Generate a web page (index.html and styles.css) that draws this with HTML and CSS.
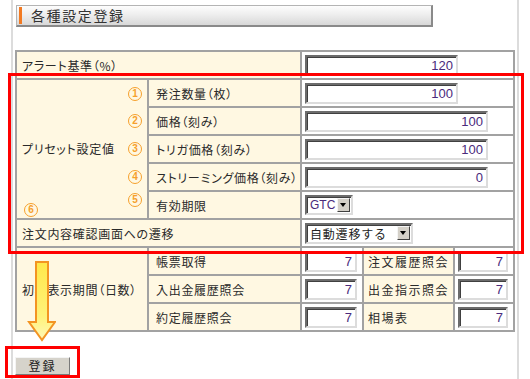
FILE: index.html
```html
<!DOCTYPE html>
<html lang="ja">
<head>
<meta charset="utf-8">
<link rel="stylesheet" href="styles.css">
</head>
<body>
<div class="panel">
  <div class="title"><span class="title-text">各種設定登録</span></div>

  <table class="settings">
    <colgroup>
      <col class="c1"><col class="c2"><col class="c3"><col class="c4"><col class="c5">
    </colgroup>
    <tr>
      <td class="lbl" colspan="2">アラート基準（%）</td>
      <td class="val" colspan="3"><span class="inp w153">120</span></td>
    </tr>
    <tr>
      <td class="lbl preset" rowspan="5">
        <div class="preset-grid">
          <span class="preset-text">プリセット設定値</span>
          <span class="num n1">1</span>
          <span class="num n2">2</span>
          <span class="num n3">3</span>
          <span class="num n4">4</span>
          <span class="num n5">5</span>
          <span class="num n6">6</span>
        </div>
      </td>
      <td class="lbl sub">発注数量（枚）</td>
      <td class="val" colspan="3"><span class="inp w153">100</span></td>
    </tr>
    <tr>
      <td class="lbl sub">価格（刻み）</td>
      <td class="val" colspan="3"><span class="inp w183">100</span></td>
    </tr>
    <tr>
      <td class="lbl sub">トリガ価格（刻み）</td>
      <td class="val" colspan="3"><span class="inp w183">100</span></td>
    </tr>
    <tr>
      <td class="lbl sub">ストリーミング価格（刻み）</td>
      <td class="val" colspan="3"><span class="inp w183">0</span></td>
    </tr>
    <tr>
      <td class="lbl sub">有効期限</td>
      <td class="val" colspan="3"><span class="sel sel-gtc"><span class="sel-text gtc">GTC</span><span class="sel-btn"></span></span></td>
    </tr>
    <tr>
      <td class="lbl" colspan="2">注文内容確認画面への遷移</td>
      <td class="val" colspan="3"><span class="sel sel-auto"><span class="sel-text">自動遷移する</span><span class="sel-btn"></span></span></td>
    </tr>
    <tr>
      <td class="lbl" rowspan="3">初期表示期間（日数）</td>
      <td class="lbl sub">帳票取得</td>
      <td class="val"><span class="inp w52">7</span></td>
      <td class="lbl sub2">注文履歴照会</td>
      <td class="val"><span class="inp w50">7</span></td>
    </tr>
    <tr>
      <td class="lbl sub">入出金履歴照会</td>
      <td class="val"><span class="inp w52">7</span></td>
      <td class="lbl sub2">出金指示照会</td>
      <td class="val"><span class="inp w50">7</span></td>
    </tr>
    <tr>
      <td class="lbl sub">約定履歴照会</td>
      <td class="val"><span class="inp w52">7</span></td>
      <td class="lbl sub2">相場表</td>
      <td class="val"><span class="inp w50">7</span></td>
    </tr>
  </table>

  <div class="actions"><span class="btn">登録</span></div>
</div>

<div class="mark mark-table"></div>
<div class="mark mark-btn"></div>
<svg class="arrow" width="30" height="82" viewBox="26 260 30 82">
  <defs>
    <linearGradient id="ag" x1="0" y1="0" x2="0" y2="1">
      <stop offset="0" stop-color="#ffe84a"/>
      <stop offset="0.7" stop-color="#fff27a"/>
      <stop offset="1" stop-color="#fff8b8"/>
    </linearGradient>
  </defs>
  <path d="M36 262 H48 V322 H55 L42 340 L29 322 H36 Z" fill="url(#ag)" stroke="#f39422" stroke-width="2" stroke-linejoin="miter"/>
</svg>
</body>
</html>
```

FILE: styles.css
```css
html, body {
  margin: 0;
  padding: 0;
  background: #ffffff;
}
body {
  position: relative;
  width: 530px;
  height: 379px;
  overflow: hidden;
  font-family: "Noto Sans CJK JP", "Noto Sans", sans-serif;
  color: #333333;
}
.panel {
  margin-left: 11px;
  width: 504px;
  height: 376px;
  border: 2px solid #dcdcdc;
  border-top: none;
  padding-top: 5px;
  box-sizing: content-box;
}
.panel > * { box-sizing: border-box; }

.title {
  margin-left: 3px;
  width: 417px;
  height: 22px;
  padding: 1px 0 1px 2px;
  border: 1px solid #b4b4b4;
  border-right: 2px solid #8a8a8a;
  border-bottom: 2px solid #8a8a8a;
  background: linear-gradient(#fdfdfd, #eeeeee 45%, #d8d8d8);
  display: flex;
  align-items: stretch;
}
.title-text {
  border-left: 3px solid #f27a22;
  padding-left: 9px;
  font-size: 14px;
  line-height: 17px;
  letter-spacing: 1.6px;
  color: #333;
  display: flex;
  align-items: center;
}

.settings {
  margin: 23px 0 0 2px;
  border-collapse: collapse;
  table-layout: fixed;
  width: 498px;
  font-size: 12px;
}
.settings td {
  border: 2px solid #a2a2a2;
  height: 26px;
  padding: 0;
  vertical-align: middle;
}
col.c1 { width: 132px; }
col.c2 { width: 153px; }
col.c3 { width: 62px; }
col.c4 { width: 91px; }
col.c5 { width: 60px; }

.lbl {
  background: #fff8e2;
  padding-left: 5px !important;
  letter-spacing: 0.7px;
  font-feature-settings: "palt";
  white-space: nowrap;
  overflow: hidden;
  color: #2a2a2a;
}
.lbl.sub { padding-left: 7px !important; }
.lbl.sub2 { padding-left: 4px !important; letter-spacing: 1.5px; }
.val { background: #ffffff; padding-left: 3px !important; }

.preset { padding: 0 !important; }
.preset-grid {
  display: grid;
  grid-template-columns: 1fr auto;
  grid-template-rows: repeat(5, 1fr);
  height: 138px;
  padding-left: 5px;
  padding-right: 5px;
}
.preset-text { grid-column: 1; grid-row: 3; align-self: center; }
.num {
  grid-column: 2;
  align-self: center;
  width: 14px;
  height: 14px;
  box-sizing: border-box;
  border: 1.6px solid #f6a02c;
  border-radius: 50%;
  color: #f6a02c;
  font-family: "Liberation Sans", Arial, sans-serif;
  font-weight: bold;
  font-size: 10px;
  line-height: 11px;
  text-align: center;
  letter-spacing: 0;
}
.n1 { grid-row: 1; }
.n2 { grid-row: 2; }
.n3 { grid-row: 3; }
.n4 { grid-row: 4; }
.n5 { grid-row: 5; margin-top: -8px; }
.n6 { grid-column: 1; grid-row: 5; align-self: end; margin: 0 0 1px 2px; }

.inp {
  display: block;
  height: 21px;
  box-sizing: border-box;
  border-style: solid;
  border-width: 2px;
  border-color: #6c6c6c #dcdcdc #dcdcdc #6c6c6c;
  box-shadow: inset 1px 1px 0 #404040;
  background: #fff;
  text-align: right;
  padding-right: 3px;
  font-family: "Liberation Sans", Arial, sans-serif;
  font-size: 13px;
  line-height: 17px;
  color: #4a2a7c;
}
.w153 { width: 153px; }
.w183 { width: 183px; }
.w52 { width: 52px; }
.w50 { width: 50px; }

.sel {
  display: flex;
  align-items: center;
  box-sizing: border-box;
  border-style: solid;
  border-width: 2px;
  border-color: #6c6c6c #dcdcdc #dcdcdc #6c6c6c;
  box-shadow: inset 1px 1px 0 #404040;
  background: #fff;
  padding: 1px 1px 1px 3px;
}
.sel-gtc { width: 48px; height: 20px; }
.sel-auto { width: 108px; height: 21px; }
.sel-text {
  flex: 1;
  font-size: 12px;
  line-height: 15px;
  letter-spacing: 0.8px;
  color: #222;
}
.sel-text.gtc {
  font-family: "Liberation Sans", Arial, sans-serif;
  font-size: 12px;
  letter-spacing: 0;
  color: #4a2a7c;
}
.sel-btn {
  flex: none;
  width: 13px;
  height: 14px;
  box-sizing: border-box;
  background: #d4d0c8;
  border: 1px solid;
  border-color: #f4f4f4 #404040 #404040 #f4f4f4;
  position: relative;
}
.sel-btn::after {
  content: "";
  position: absolute;
  left: 2px;
  top: 4px;
  border-left: 3.5px solid transparent;
  border-right: 3.5px solid transparent;
  border-top: 4px solid #000;
}

.actions {
  margin: 20px 0 0 2px;
}
.btn {
  display: inline-flex;
  align-items: center;
  justify-content: center;
  width: 55px;
  height: 18px;
  box-sizing: border-box;
  background: #d6d3cb;
  border: 1px solid;
  border-color: #f4f4f4 #7a7a7a #7a7a7a #f4f4f4;
  font-size: 12px;
  letter-spacing: 2px;
  color: #222;
}

.mark {
  position: absolute;
  border: 3px solid #ff0000;
  box-sizing: border-box;
}
.mark-table { left: 8px; top: 73px; width: 516px; height: 181px; }
.mark-btn { left: 5px; top: 346px; width: 75px; height: 32px; }
.arrow {
  position: absolute;
  left: 26px;
  top: 260px;
}
```
